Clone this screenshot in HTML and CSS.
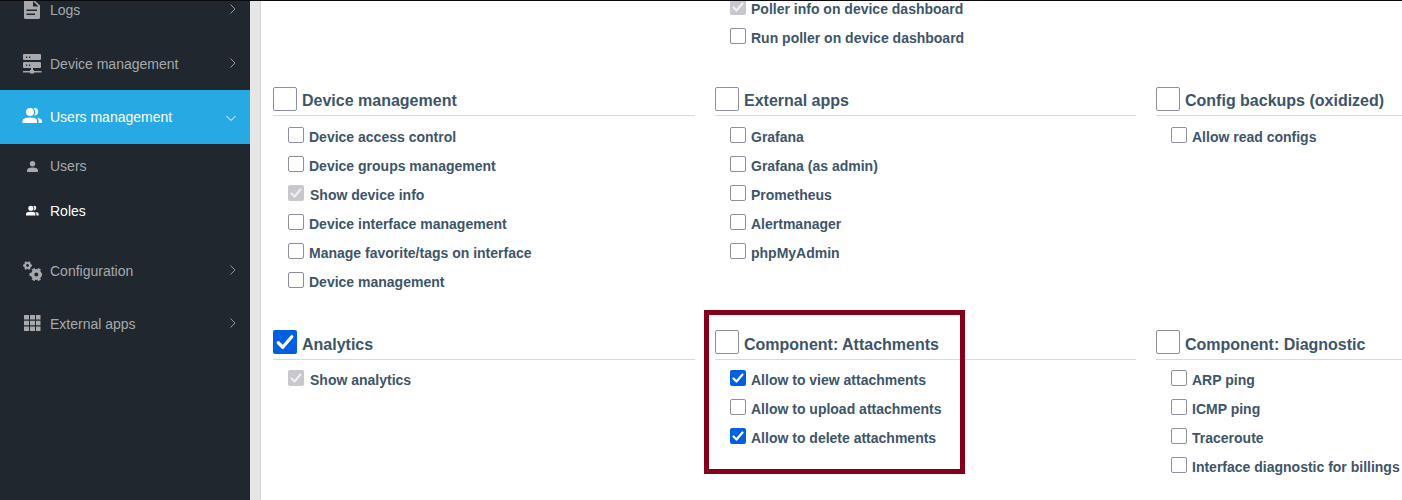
FILE: index.html
```html
<!DOCTYPE html>
<html lang="en">
<head>
<meta charset="utf-8">
<title>Roles</title>
<link rel="stylesheet" href="styles.css">
</head>
<body>
<div class="app">
  <nav class="sidebar">
    <a class="item"><svg class="icon" viewBox="0 0 20 20"><path fill-rule="evenodd" d="M3.500 0H12l6 5.500V17.500q0 1.500-1.500 1.500h-13Q2 19 2 17.500V1.500Q2 0 3.500 0ZM11 1v5.500h5.500ZM4.500 9.500v1.500h10.500V9.500ZM4.500 13.500V15h8.500v-1.500Z"/></svg><span>Logs</span><svg class="chev" viewBox="0 0 10 10"><path d="M2.500 0.500 7 5 2.500 9.500"/></svg></a>
    <a class="item device"><svg class="icon" viewBox="0 0 20 20"><path fill-rule="evenodd" d="M2 0h16q1 0 1 1v4q0 1-1 1H2Q1 6 1 5V1Q1 0 2 0ZM4 2.500V4h1.200V2.500ZM7 2.500V4h1.200V2.500ZM2 8h16q1 0 1 1v4q0 1-1 1h-7v2h1v1h7.500v1.500H12v1H8v-1H1V17h7v-1h1v-2H2q-1 0-1-1V9q0-1 1-1ZM4 10.500V12h1.200v-1.500ZM7 10.500V12h1.200v-1.500Z"/></svg><span>Device management</span><svg class="chev" viewBox="0 0 10 10"><path d="M2.500 0.500 7 5 2.500 9.500"/></svg></a>
    <a class="item open"><svg class="icon" viewBox="-0.500 0 20 20"><path d="M7.500 9a4 4 0 1 0 0-8 4 4 0 0 0 0 8ZM0 16v-2q0-3.500 7.500-3.500T14.500 14v2ZM11.200 1.400q2-.8 3.600.7 1.400 1.500.8 3.700-.8 2.700-4.200 2.900 1.500-1.400 1.500-3.700 0-2.100-1.700-3.600ZM14.500 10.700q5 .8 5 3.300v2h-3.400v-2q0-2-1.600-3.300Z"/></svg><span>Users management</span><svg class="chev down" viewBox="0 0 10 10"><path d="M0.500 3 5 7.500 9.500 3"/></svg></a>
    <div class="submenu">
      <a class="item sub"><svg class="icon small" viewBox="0 0 12 12"><path d="M6 6a2.500 2.500 0 1 0 0-5 2.500 2.500 0 0 0 0 5ZM1 11V9.500Q1 7 6 7t5 2.500V11Z"/></svg><span>Users</span></a>
      <a class="item sub current"><svg class="icon small" viewBox="0 0 20 20"><path d="M7.500 9a4 4 0 1 0 0-8 4 4 0 0 0 0 8ZM0 16v-2q0-3.500 7.500-3.500T14.500 14v2ZM11.200 1.400q2-.8 3.600.7 1.400 1.500.8 3.700-.8 2.700-4.200 2.900 1.500-1.400 1.500-3.700 0-2.100-1.700-3.600ZM14.500 10.700q5 .8 5 3.300v2h-3.400v-2q0-2-1.600-3.300Z"/></svg><span>Roles</span></a>
    </div>
    <a class="item config"><svg class="icon gears" viewBox="0 0 20 20"><g class="gear"><circle class="small-ring" cx="5.500" cy="4.500" r="2.500"/><circle class="teeth small-teeth" cx="5.500" cy="4.500" r="3.800" pathLength="60"/><circle cx="14.300" cy="13.500" r="3.700"/><circle class="teeth" cx="14.300" cy="13.500" r="5.800" pathLength="60"/></g></svg><span>Configuration</span><svg class="chev" viewBox="0 0 10 10"><path d="M2.500 0.500 7 5 2.500 9.500"/></svg></a>
    <a class="item"><svg class="icon" viewBox="0 0 20 20"><path d="M2 1h5v4.500H2zM8 1h5v4.500H8zM14 1h4.500v4.500H14zM2 6.800h5v4.400H2zM8 6.800h5v4.400H8zM14 6.800h4.500v4.400H14zM2 12.500h5V17H2zM8 12.500h5V17H8zM14 12.500h4.500V17H14z"/></svg><span>External apps</span><svg class="chev" viewBox="0 0 10 10"><path d="M2.500 0.500 7 5 2.500 9.500"/></svg></a>
  </nav>
  <main class="content">
    <section class="group top">
      <label class="perm"><i class="box locked"><svg viewBox="0 0 16 16"><path d="M3.500 8.500 6.500 11.500 12.500 4.500"/></svg></i><span>Poller info on device dashboard</span></label>
      <label class="perm"><i class="box"></i><span>Run poller on device dashboard</span></label>
    </section>
    <section class="group first">
      <h3><i class="box"></i><span>Device management</span></h3>
      <label class="perm"><i class="box"></i><span>Device access control</span></label>
      <label class="perm"><i class="box"></i><span>Device groups management</span></label>
      <label class="perm"><i class="box locked"><svg viewBox="0 0 16 16"><path d="M3.500 8.500 6.500 11.500 12.500 4.500"/></svg></i><span>Show device info</span></label>
      <label class="perm"><i class="box"></i><span>Device interface management</span></label>
      <label class="perm"><i class="box"></i><span>Manage favorite/tags on interface</span></label>
      <label class="perm"><i class="box"></i><span>Device management</span></label>
    </section>
    <section class="group">
      <h3><i class="box"></i><span>External apps</span></h3>
      <label class="perm"><i class="box"></i><span>Grafana</span></label>
      <label class="perm"><i class="box"></i><span>Grafana (as admin)</span></label>
      <label class="perm"><i class="box"></i><span>Prometheus</span></label>
      <label class="perm"><i class="box"></i><span>Alertmanager</span></label>
      <label class="perm"><i class="box"></i><span>phpMyAdmin</span></label>
    </section>
    <section class="group">
      <h3><i class="box"></i><span>Config backups (oxidized)</span></h3>
      <label class="perm"><i class="box"></i><span>Allow read configs</span></label>
    </section>
    <section class="group low">
      <h3><i class="box on"><svg viewBox="0 0 16 16"><path d="M3.500 8.500 6.500 11.500 12.500 4.500"/></svg></i><span>Analytics</span></h3>
      <label class="perm"><i class="box locked"><svg viewBox="0 0 16 16"><path d="M3.500 8.500 6.500 11.500 12.500 4.500"/></svg></i><span>Show analytics</span></label>
    </section>
    <section class="group low marked">
      <h3><i class="box"></i><span>Component: Attachments</span></h3>
      <label class="perm"><i class="box on"><svg viewBox="0 0 16 16"><path d="M3.500 8.500 6.500 11.500 12.500 4.500"/></svg></i><span>Allow to view attachments</span></label>
      <label class="perm"><i class="box"></i><span>Allow to upload attachments</span></label>
      <label class="perm"><i class="box on"><svg viewBox="0 0 16 16"><path d="M3.500 8.500 6.500 11.500 12.500 4.500"/></svg></i><span>Allow to delete attachments</span></label>
    </section>
    <section class="group low">
      <h3><i class="box"></i><span>Component: Diagnostic</span></h3>
      <label class="perm"><i class="box"></i><span>ARP ping</span></label>
      <label class="perm"><i class="box"></i><span>ICMP ping</span></label>
      <label class="perm"><i class="box"></i><span>Traceroute</span></label>
      <label class="perm"><i class="box"></i><span>Interface diagnostic for billings</span></label>
    </section>
  </main>
</div>
</body>
</html>
```
FILE: styles.css
```css
*, *::after { box-sizing: border-box; }
body { margin: 0; overflow: hidden; font: 14px/20px "Liberation Sans", Arial, sans-serif; }
.app { display: flex; width: 1402px; height: 500px; border-top: 1px solid #0b0b0d; background: #fff; overflow: hidden; }
.sidebar { width: 250px; flex: none; background: #20272f; margin-top: -18px; height: 520px; clip-path: inset(18px 0 0 0); }
.item { display: flex; align-items: center; height: 53.5px; padding: 0 14px 0 22px; color: #a7a9ac; fill: currentColor; }
.device, .config { padding-top: 1px; }
.item span { flex: 1; }
.icon { width: 20px; height: 20px; margin-right: 8px; flex: none; }
.icon.small { width: 13px; height: 13px; margin: 0 11px 0 4px; }
.chev { width: 10px; height: 10px; margin: 0 -2px 2px 0; fill: none; stroke: currentColor; stroke-width: 1; opacity: .85; }
.down { margin: 2px 0 0; opacity: 1; }
.open { background: #27a9e3; color: #fff; }
.submenu { height: 100px; }
.sub { height: 45px; }
.current { color: #fff; }
.gear { fill: none; stroke: currentColor; stroke-width: 3.4; }
.small-ring { stroke-width: 2.2; }
.teeth { stroke-width: 2; stroke-dasharray: 5 5; stroke-dashoffset: 2.5; }
.small-teeth { stroke-width: 1.4; }
.content { flex: 1; min-width: 0; display: grid; grid-template-columns: 422px 421px 422px; grid-template-rows: 86px 243px 190px; column-gap: 20px; padding-left: 12px; margin-left: 10px; border-left: 1px solid #d4d4d4; box-shadow: -10px 0 #e6e6e6; color: #3e5569; font-weight: bold; }
.top { grid-column: 2; margin-top: -2px; }
.first { grid-column: 1; }
.group h3 { display: flex; height: 29px; margin: 0 0 11px; border-bottom: 1px solid #d9d9dc; font-size: 16px; line-height: 27px; gap: 5px; }
.group.low h3 { height: 30px; margin-bottom: 10px; line-height: 29px; }
.perm { display: flex; height: 29px; padding-left: 15px; gap: 5px; line-height: 20px; white-space: nowrap; }
.box { width: 16px; height: 16px; flex: none; border: 1px solid #8f8f9d; border-radius: 2px; background: #fff; }
h3 .box { width: 24px; height: 24px; }
.box.on { border: 0; background: #0060df; }
.box.locked { border: 0; background: #c7c7cd; }
.first .locked + span, .low .locked + span { margin-left: 1px; }
.box svg { display: block; width: 100%; height: 100%; fill: none; stroke: #fff; stroke-width: 2.2; stroke-linecap: round; stroke-linejoin: round; }
.locked svg { stroke: #f0f0f3; }
.marked { position: relative; }
.marked::after { content: ""; position: absolute; left: -11px; top: -20px; width: 261px; height: 164px; border: 5px solid #850018; }
```
